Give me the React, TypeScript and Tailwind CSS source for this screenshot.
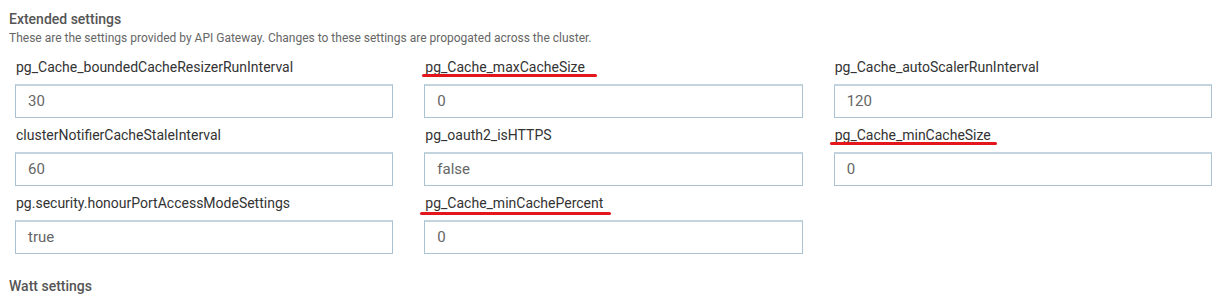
import React from "react";

type Field = {
  label: string;
  value: string;
  mark?: { left: number; right: number; top: number };
};

const fields: Field[] = [
  { label: "pg_Cache_boundedCacheResizerRunInterval", value: "30" },
  { label: "pg_Cache_maxCacheSize", value: "0", mark: { left: -2, right: -12, top: 16 } },
  { label: "pg_Cache_autoScalerRunInterval", value: "120" },
  { label: "clusterNotifierCacheStaleInterval", value: "60" },
  { label: "pg_oauth2_isHTTPS", value: "false" },
  { label: "pg_Cache_minCacheSize", value: "0", mark: { left: -4, right: -6, top: 16 } },
  { label: "pg.security.honourPortAccessModeSettings", value: "true" },
  { label: "pg_Cache_minCachePercent", value: "0", mark: { left: -4, right: -8, top: 18 } },
];

function SettingField({ field }: { field: Field }) {
  return (
    <div className="flex flex-col">
      <div className="pt-[8px] pb-[8px] h-[34px] leading-[18px] text-[14px] text-[#333]">
        <span className="relative inline-block pl-[1px]">
          {field.label}
          {field.mark && (
            <span
              className="absolute h-[3px] rounded-full bg-[#e3161c]"
              style={{ left: field.mark.left, right: field.mark.right, top: field.mark.top }}
            />
          )}
        </span>
      </div>
      <div className="h-[34px] border border-[#aac2d2] border-t-2 border-t-[#c3d4df] bg-white flex items-center px-[12px] text-[15px] text-[#666]">
        {field.value}
      </div>
    </div>
  );
}

export default function App() {
  return (
    <div className="w-[1227px] h-[299px] bg-white overflow-hidden" style={{ fontFamily: "Roboto, 'Liberation Sans', sans-serif" }}>
      <div className="pl-[9px] pt-[10px]">
        <div className="text-[14px] leading-[18px] font-medium text-[#555]">Extended settings</div>
        <div className="text-[12px] leading-[14px] mt-[3px] text-[#666]">
          These are the settings provided by API Gateway. Changes to these settings are propogated across the cluster.
        </div>
      </div>
      <div className="grid grid-cols-3 gap-x-[31px] pl-[15px] pr-[15px] mt-[5px]">
        {fields.map((f) => (
          <SettingField key={f.label} field={f} />
        ))}
      </div>
      <div className="pl-[9px] mt-[23px] text-[14px] leading-[18px] font-medium text-[#555]">Watt settings</div>
    </div>
  );
}
